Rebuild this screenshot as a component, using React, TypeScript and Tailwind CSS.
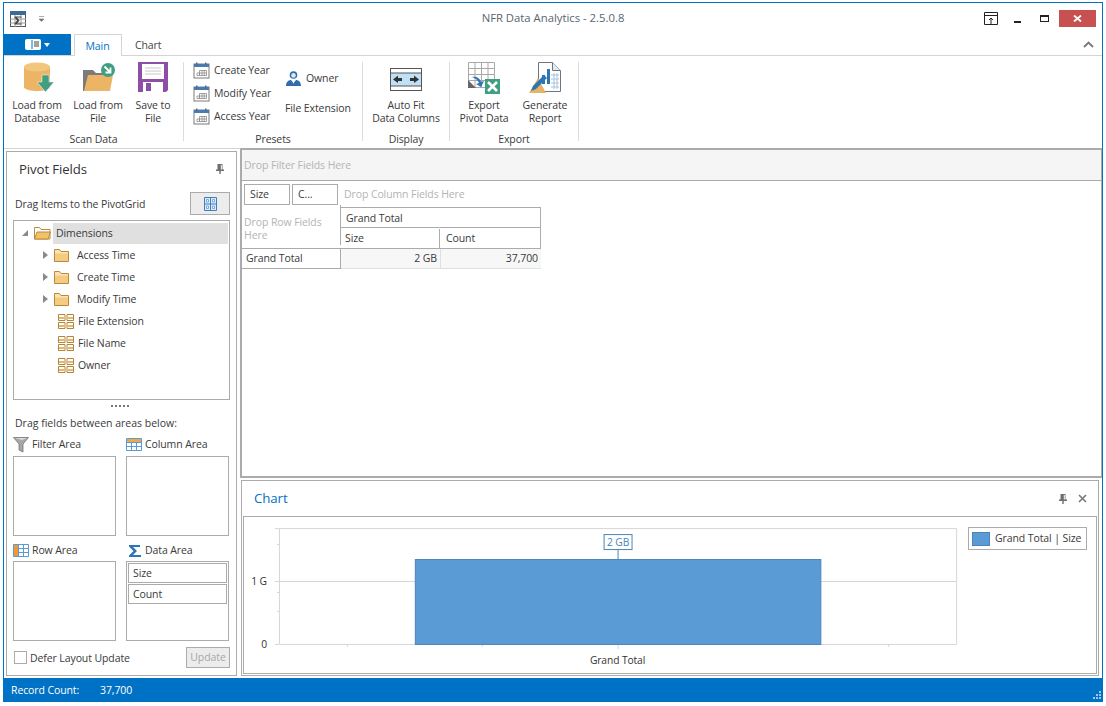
import React from 'react';

const CalendarIcon = () => (
  <svg width="17" height="17" viewBox="0 0 17 17" className="shrink-0">
    <rect x="1" y="2" width="15" height="14" fill="#fff" stroke="#7a7a7a" />
    <rect x="1" y="2" width="15" height="3" fill="#4a7bb0" />
    <rect x="3" y="0.5" width="1.5" height="3" fill="#4a6f98" />
    <rect x="12" y="0.5" width="1.5" height="3" fill="#4a6f98" />
    <path d="M6.5 8.500h7v5h-7zM4 11h9.500M9 8.500v5M11.200 8.500v5M6.500 11v2.500H4V11" fill="none" stroke="#8a8a8a" strokeWidth="0.800" />
  </svg>
);

const OwnerIcon = () => (
  <svg width="17" height="17" viewBox="0 0 17 17" className="shrink-0">
    <circle cx="8.500" cy="5" r="3.800" fill="#2f6cb0" />
    <circle cx="8.500" cy="5.400" r="2.300" fill="#dbe8f5" />
    <path d="M1 16c0-4 2.500-6 5-6l2.500 3 2.500-3c2.500 0 5 2 5 6z" fill="#2f6cb0" />
    <path d="M7.500 10.500h2L8.500 14z" fill="#fff" />
  </svg>
);

const DatabaseIcon = () => (
  <svg width="32" height="31" viewBox="0 0 32 31">
    <path d="M1 5v20c0 2.500 7 4 13 4s13-1.500 13-4V5z" fill="#ebb565" />
    <ellipse cx="14" cy="5" rx="13" ry="4.500" fill="#f1c77f" />
    <path d="M19 13h7v7h5l-8.500 10L14 20h5z" fill="#3f9f80" stroke="#fff" strokeWidth="0.500" />
  </svg>
);

const FolderLoadIcon = () => (
  <svg width="33" height="31" viewBox="0 0 33 31">
    <path d="M0 8h10l3 3h10v18H0z" fill="#7b7b7b" />
    <path d="M5 13h25l-3 16H1z" fill="#ecb566" />
    <circle cx="25" cy="8" r="7" fill="#3f9f80" />
    <path d="M21.500 4.500l5.500 5.500M27.500 5.500v5h-5" fill="none" stroke="#fff" strokeWidth="1.800" />
  </svg>
);

const SaveIcon = () => (
  <svg width="31" height="31" viewBox="0 0 31 31">
    <path d="M0 0h30v28l-2 2H0z" fill="#8e4ea6" />
    <rect x="4" y="2" width="22" height="15" fill="#fff" />
    <path d="M7 6h16M7 9h16M7 12h16" stroke="#c8c8c8" strokeWidth="1" />
    <rect x="5" y="20" width="20" height="10" fill="#fff" />
    <rect x="8" y="21" width="5" height="8" fill="#8e4ea6" />
  </svg>
);

const AutoFitIcon = () => (
  <svg width="33" height="23" viewBox="0 0 33 23">
    <rect x="0.500" y="0.500" width="31" height="22" fill="#fff" stroke="#555" />
    <rect x="1" y="5" width="30" height="13" fill="#bfe0f5" />
    <path d="M1 5h30M1 18h30" stroke="#555" />
    <path d="M3 11.500l5-4v2.500h4v3H8V15zM29 11.500l-5-4v2.500h-4v3h4V15z" fill="#333" />
  </svg>
);

const ExportIcon = () => (
  <svg width="33" height="32" viewBox="0 0 33 32">
    <path d="M0.500 0.500h26v25h-26zM0.500 6.500h26M0.500 12.500h26M0.500 18.500h26M7 0.500v25M13.500 0.500v25M20 0.500v25" fill="#fff" stroke="#a8a8a8" />
    <path d="M0 18v8h8z" fill="#666" />
    <path d="M4 15c4-1 8 1 9 5l3-1-3 6-5-3 3-1c-1-3-4-5-7-6z" fill="#2e75b6" />
    <rect x="17" y="17" width="15" height="15" fill="#3f9f80" />
    <path d="M20 20l9 9M29 20l-9 9" stroke="#fff" strokeWidth="2.600" />
  </svg>
);

const ReportIcon = () => (
  <svg width="33" height="33" viewBox="0 0 33 33">
    <path d="M9.500 0.500h14l8 8v21h-22z" fill="#fff" stroke="#6a7686" />
    <path d="M23.500 0.500v8h8" fill="#e8e8e8" stroke="#6a7686" />
    <rect x="13" y="13" width="3" height="9" fill="#2e75b6" />
    <rect x="18" y="7" width="3" height="15" fill="#2e75b6" />
    <path d="M22 13h8M22 17h8M22 21h8M22 25h8M25 11v16M28 11v16" stroke="#a8c4de" />
    <path d="M0 31L9 16l8 15z" fill="#e6b464" />
    <path d="M2 29l2-5L15 13l3 3L7 27z" fill="#2e75b6" />
  </svg>
);

const BigButton = ({ icon, lines, width }: { icon: React.ReactNode; lines: string[]; width: string }) => (
  <div className={`${width} flex flex-col items-center shrink-0 pt-[6px]`}>
    <div className="h-[36px] shrink-0 flex items-start justify-center">{icon}</div>
    <div className="mt-[1px] text-center leading-[13px] whitespace-nowrap">
      {lines.map((l) => (
        <div key={l}>{l}</div>
      ))}
    </div>
  </div>
);

const RibbonGroup = ({ label, width, children }: { label: string; width: string; children: React.ReactNode }) => (
  <div className={`${width} shrink-0 flex`}>
    <div className="flex-1 flex flex-col">
      <div className="h-[75px] shrink-0 flex">{children}</div>
      <div className="h-[16px] leading-[16px] text-center">{label}</div>
    </div>
    <div className="w-px h-[79px] mt-[6px] bg-[#dcdcdc]" />
  </div>
);

const OpenFolderIcon = () => (
  <svg width="17" height="14" viewBox="0 0 17 14" className="shrink-0">
    <path d="M0.500 1.500h5l1.500 2h9v9.500H0.500z" fill="#fff" stroke="#b88a3c" />
    <path d="M3 6h13.500l-2.500 7H0.500z" fill="#f3c267" stroke="#b88a3c" />
  </svg>
);

const FolderIcon = () => (
  <svg width="15" height="13" viewBox="0 0 15 13" className="shrink-0">
    <path d="M0.500 0.500h5l1.500 2h7.500v10H0.500z" fill="#fbe3b0" stroke="#b88a3c" />
    <path d="M1 4.500h13v7.500H1z" fill="#f4cb80" />
  </svg>
);

const FieldIcon = () => (
  <svg width="16" height="15" viewBox="0 0 16 15" className="shrink-0">
    <path d="M0.500 0.500h6.500v6H0.500zM9 0.500h6.500v6H9zM0.500 8.500h6.500v6H0.500zM9 8.500h6.500v6H9z" fill="#fff" stroke="#b5853c" />
    <path d="M1 4h5.500M9.500 4H15M1 12h5.500M9.500 12H15" stroke="#e8b86a" strokeWidth="2" />
  </svg>
);

const PinIcon = ({ color = '#6e6e6e' }: { color?: string }) => (
  <svg width="8" height="10" viewBox="0 0 8 10">
    <path d="M1.500 0h5v5.500H8V7H4.700v3h-1.400V7H0V5.500h1.500z" fill={color} />
    <path d="M4.800 1v4.500h1V1z" fill="#fff" />
  </svg>
);

const Arrow = () => (
  <svg width="5" height="8" viewBox="0 0 5 8" className="shrink-0">
    <path d="M0 0l5 4-5 4z" fill="#8a8a8a" />
  </svg>
);

const TreeChild = ({ label }: { label: string }) => (
  <div className="h-[22px] flex items-center pl-[29px]">
    <Arrow />
    <div className="ml-[6px]"><FolderIcon /></div>
    <span className="ml-[8px] pt-[1px]">{label}</span>
  </div>
);

const TreeLeaf = ({ label }: { label: string }) => (
  <div className="h-[22px] flex items-center pl-[44px]">
    <FieldIcon />
    <span className="ml-[4px] pt-[1px]">{label}</span>
  </div>
);

const AreaCell = ({ icon, label, labelClass, children }: { icon: React.ReactNode; label: string; labelClass: string; children?: React.ReactNode }) => (
  <div>
    <div className={`h-[20px] ${labelClass} flex items-center gap-[1px]`}>
      <div className="w-[18px] flex justify-start">{icon}</div>
      <span>{label}</span>
    </div>
    <div className="h-[80px] border border-[#ababab] p-[1px]">{children}</div>
  </div>
);

const Chart = () => (
  <svg width="853" height="157" viewBox="244 517 853 157" className="block">
    <path d="M279.500 528.500H957.500V644.500" fill="none" stroke="#d6d6d6" />
    <path d="M279.500 528V644.500H957.500M279.500 581.500H957.500" fill="none" stroke="#d6d6d6" />
    <path d="M275 528.500h4M277 544.500h2M275 581.500h4M277 592.500h2M277 611.500h2M275 644.500h4M347.500 645v2M482.500 645v2M618.500 645v4M889.500 645v2" stroke="#d6d6d6" />
    <rect x="415.500" y="559.500" width="406" height="85" fill="#5b9bd5" stroke="#4a84b8" />
    <path d="M618.500 550v9" stroke="#4a84b8" />
    <rect x="604.500" y="534.500" width="28" height="15" fill="#fff" stroke="#4a84b8" />
    <text x="618.500" y="546" textAnchor="middle" fontSize="10.300" fill="#4a84b8">2 GB</text>
    <text x="267" y="585" textAnchor="end" fontSize="10.300" fill="#333">1 G</text>
    <text x="267" y="648" textAnchor="end" fontSize="10.300" fill="#333">0</text>
    <text x="618" y="664" textAnchor="middle" fontSize="10.300" fill="#333">Grand Total</text>
  </svg>
);

export default function App() {
  return (
    <div className="w-[1106px] h-[706px] bg-white pt-[2px] pl-[3px] pr-[3px] pb-[4px] font-['Open_Sans',sans-serif] text-[10.500px] tracking-[-0.1px] text-[#3a3a3a] overflow-hidden">
      <div className="h-full flex flex-col border-x border-t border-[#0072c6]">
        {/* title bar */}
        <div className="h-[31px] shrink-0 grid grid-cols-[1fr_auto_1fr] items-center">
          <div className="flex items-center pl-[6px]">
            <svg width="16" height="16" viewBox="0 0 16 16">
              <rect x="0.500" y="0.500" width="15" height="15" fill="#fff" stroke="#555" />
              <rect x="0" y="0" width="16" height="4" fill="#3a6a98" />
              <path d="M0 8h16M0 12h16M5 4v12M11 4v12" stroke="#999" />
              <path d="M4.500 5.500h7v1H7l2.500 3L7 12.500h4.500v1h-7v-.8L7 9.500l-2.500-3.200z" fill="#444" />
            </svg>
            <svg width="7" height="6" viewBox="0 0 7 6" className="ml-[12px]">
              <path d="M1 0.500h5M1 3h5l-2.500 2.500z" fill="#777" stroke="#777" strokeWidth="0.600" />
            </svg>
          </div>
          <div className="text-[11.300px] tracking-normal text-[#5a6470] pb-[1px]">NFR Data Analytics - 2.5.0.8</div>
          <div className="flex items-center justify-end pr-[6px]">
            <svg width="14" height="13" viewBox="0 0 14 13">
              <path d="M0.500 0.500h13v12h-13zM0.500 3.500h13M7 12V6M5 8l2-2 2 2" fill="none" stroke="#222" />
            </svg>
            <div className="w-[7px] h-[2px] bg-[#222] ml-[16px] mt-[7px]" />
            <div className="w-[9px] h-[7px] border border-t-2 border-[#222] ml-[19px]" />
            <div className="w-[37px] h-[17px] ml-[10px] bg-[#c75050] flex items-center justify-center">
              <svg width="9" height="7" viewBox="0 0 9 7">
                <path d="M1 0.500l7 6M8 0.500l-7 6" stroke="#fff" strokeWidth="1.800" />
              </svg>
            </div>
          </div>
        </div>

        {/* tab row */}
        <div className="h-[22px] shrink-0 flex border-b border-[#d4d4d4]">
          <div className="w-[67px] h-[21px] bg-[#0072c6] flex items-center justify-center gap-[3px]">
            <svg width="16" height="11" viewBox="0 0 16 11">
              <rect x="0.500" y="0.500" width="15" height="10" rx="1" fill="#fff" stroke="#fff" />
              <path d="M7 1v9" stroke="#0072c6" />
              <path d="M9 3h5M9 5h5M9 7h5" stroke="#444" />
            </svg>
            <svg width="6" height="4" viewBox="0 0 6 4"><path d="M0 0h6L3 4z" fill="#fff" /></svg>
          </div>
          <div className="ml-[3px] w-[48px] h-[22px] pt-[2px] pr-[1px] border-x border-t border-[#d4d4d4] bg-white text-[#0072c6] flex items-center justify-center">Main</div>
          <div className="ml-[13px] h-[21px] pt-[3px] flex items-center text-[#444]">Chart</div>
          <div className="flex-1 flex justify-end items-center pr-[8px]">
            <svg width="11" height="7" viewBox="0 0 11 7"><path d="M1 6l4.500-4.500L10 6" fill="none" stroke="#777" strokeWidth="1.800" /></svg>
          </div>
        </div>

        {/* ribbon */}
        <div className="h-[92px] shrink-0 flex">
          <RibbonGroup label="Scan Data" width="w-[180px]">
            <BigButton width="w-[64px] ml-[1px]" lines={['Load from', 'Database']} icon={<div className="pl-[3px]"><DatabaseIcon /></div>} />
            <BigButton width="w-[58px]" lines={['Load from', 'File']} icon={<div className="pl-[2px]"><FolderLoadIcon /></div>} />
            <BigButton width="w-[52px]" lines={['Save to', 'File']} icon={<SaveIcon />} />
          </RibbonGroup>
          <RibbonGroup label="Presets" width="w-[179px]">
            <div className="pl-[9px] pt-[3px] w-[101px] flex flex-col">
              {['Create Year', 'Modify Year', 'Access Year'].map((t) => (
                <div key={t} className="h-[23px] shrink-0 flex items-center gap-[4px] whitespace-nowrap">
                  <CalendarIcon />
                  <span>{t}</span>
                </div>
              ))}
            </div>
            <div className="pt-[3px] flex flex-col whitespace-nowrap">
              <div className="h-[23px] shrink-0 mt-[8px] flex items-center gap-[4px]">
                <OwnerIcon />
                <span>Owner</span>
              </div>
              <div className="mt-[7px] h-[23px] shrink-0 flex items-center">File Extension</div>
            </div>
          </RibbonGroup>
          <RibbonGroup label="Display" width="w-[87px]">
            <BigButton width="w-[86px]" lines={['Auto Fit', 'Data Columns']} icon={<div className="pt-[6px]"><AutoFitIcon /></div>} />
          </RibbonGroup>
          <RibbonGroup label="Export" width="w-[129px]">
            <BigButton width="w-[68px]" lines={['Export', 'Pivot Data']} icon={<ExportIcon />} />
            <BigButton width="w-[54px]" lines={['Generate', 'Report']} icon={<ReportIcon />} />
          </RibbonGroup>
        </div>

        {/* body */}
        <div className="flex-1 min-h-0 flex">
          <div className="w-[236px] shrink-0 border-t border-[#d4d4d4] pt-[2px] pl-[2px]">
            <div className="w-[231px] h-[525px] border border-[#ababab]">
              <div className="h-[34px] flex items-center justify-between pl-[12px] pr-[12px]">
                <span className="text-[13.200px] text-[#333] pt-[1px]">Pivot Fields</span>
                <PinIcon />
              </div>
              <div className="mt-[6px] h-[23px] flex items-center justify-between pl-[8px] pr-[6px]">
                <span className="pt-[2px]">Drag Items to the PivotGrid</span>
                <div className="w-[40px] h-[23px] bg-[#ececec] border border-[#ababab] flex items-center justify-center">
                  <svg width="13" height="14" viewBox="0 0 13 14">
                    <path d="M0.500 0.500h12v13h-12z" fill="#dcebf8" stroke="#3f7fbf" />
                    <path d="M6.500 0.500v13M0.500 7h12" stroke="#3f7fbf" />
                    <path d="M2.500 2.500h2v2.500h-2zM8.500 2.500h2v2.500h-2zM2.500 9h2v2.500h-2zM8.500 9h2v2.500h-2z" fill="#fff" stroke="#7faadb" />
                  </svg>
                </div>
              </div>
              <div className="mt-[5px] ml-[6px] w-[217px] h-[180px] border border-[#ababab] pt-[1px] pr-[1px]">
                <div className="h-[22px] flex items-center">
                  <svg width="6" height="6" viewBox="0 0 6 6" className="ml-[8px]"><path d="M6 0v6H0z" fill="#8a8a8a" /></svg>
                  <div className="ml-[6px] w-[18px]"><OpenFolderIcon /></div>
                  <div className="ml-[1px] flex-1 h-[21px] bg-[#e0e0e0] flex items-center pl-[3px] pt-[1px]">Dimensions</div>
                </div>
                <TreeChild label="Access Time" />
                <TreeChild label="Create Time" />
                <TreeChild label="Modify Time" />
                <TreeLeaf label="File Extension" />
                <TreeLeaf label="File Name" />
                <TreeLeaf label="Owner" />
              </div>
              <div className="h-[12px] flex items-center justify-center gap-[2px] pr-[3px]">
                {[0, 1, 2, 3, 4].map((i) => (
                  <div key={i} className="w-[2px] h-[2px] bg-[#777]" />
                ))}
              </div>
              <div className="h-[24px] flex items-center pl-[8px] tracking-normal">Drag fields between areas below:</div>
              <div className="ml-[6px] grid grid-cols-[103px_103px] gap-x-[10px] gap-y-[5px]">
                <AreaCell
                  label="Filter Area"
                  labelClass="pb-[3px]"
                  icon={
                    <svg width="16" height="17" viewBox="0 0 16 17">
                      <path d="M0.500 1.500h15L10 8v8l-4-2V8z" fill="#a8a8a8" stroke="#666" strokeWidth="0.700" />
                      <path d="M2 2h12L9 4z" fill="#dcdcdc" />
                    </svg>
                  }
                />
                <AreaCell
                  label="Column Area"
                  labelClass="pb-[3px]"
                  icon={
                    <svg width="16" height="13" viewBox="0 0 16 13">
                      <path d="M0.500 0.500h15v12h-15zM0.500 4.500h15M0.500 8.500h15M5.500 0.500v12M10.500 0.500v12" fill="#fff" stroke="#5b9bd5" />
                      <rect x="1" y="1" width="14" height="3" fill="#f0a94a" />
                    </svg>
                  }
                />
                <AreaCell
                  label="Row Area"
                  labelClass="pb-[1px]"
                  icon={
                    <svg width="16" height="13" viewBox="0 0 16 13">
                      <path d="M0.500 0.500h15v12h-15zM0.500 4.500h15M0.500 8.500h15M5.500 0.500v12M10.500 0.500v12" fill="#fff" stroke="#5b9bd5" />
                      <rect x="1" y="1" width="4" height="11" fill="#ee9a3a" />
                    </svg>
                  }
                />
                <AreaCell
                  label="Data Area"
                  labelClass="pb-[1px]"
                  icon={
                    <svg width="16" height="14" viewBox="0 0 16 14" className="ml-[2px]">
                      <path d="M1 1h11v2H5l4 4-4 4h8v2H1v-1.500L5.500 7 1 2.500z" fill="#2b75b8" />
                    </svg>
                  }
                >
                  <div className="h-[20px] pt-[1px] border border-[#ababab] flex items-center pl-[4px]">Size</div>
                  <div className="mt-[1px] h-[20px] pt-[1px] border border-[#ababab] flex items-center pl-[4px]">Count</div>
                </AreaCell>
              </div>
              <div className="mt-[6px] h-[21px] flex items-center pl-[7px] pr-[6px]">
                <div className="w-[13px] h-[13px] border border-[#ababab] bg-white" />
                <span className="ml-[3px] pt-[2px]">Defer Layout Update</span>
                <div className="ml-auto w-[44px] h-[21px] bg-[#ececec] border border-[#ababab] text-[#a8a8a8] flex items-center justify-center">Update</div>
              </div>
            </div>
          </div>

          <div className="w-[862px] flex flex-col">
            <div className="h-[330px] shrink-0 border-2 border-r border-[#ababab]">
              <div className="h-[31px] pt-[2px] bg-[#f5f5f5] border-b border-[#ababab] flex items-center pl-[2px] text-[#b4b4b4]">Drop Filter Fields Here</div>
              <div className="pt-[3px] pl-[2px] flex gap-[2px]">
                <div className="w-[46px] h-[21px] border border-[#ababab] flex items-center pl-[5px]">Size</div>
                <div className="w-[46px] h-[21px] border border-[#ababab] flex items-center pl-[5px]">C...</div>
                <div className="ml-[4px] h-[21px] flex items-center text-[#b4b4b4]">Drop Column Fields Here</div>
              </div>
              <div className="flex">
                <div className="w-[99px] shrink-0 h-[40px] pt-[11px] pl-[2px] leading-[13px] text-[#b4b4b4] border-r border-[#ababab]">Drop Row Fields<br />Here</div>
                <div className="w-[200px] mt-[2px] border-t border-r border-[#ababab]">
                  <div className="h-[20px] pt-[2px] flex items-center pl-[5px] border-b border-[#ababab]">Grand Total</div>
                  <div className="h-[20px] pt-[1px] flex">
                    <div className="w-[99px] flex items-center pl-[4px] border-r border-[#ababab]">Size</div>
                    <div className="flex-1 flex items-center pl-[6px]">Count</div>
                  </div>
                </div>
              </div>
              <div className="flex h-[21px] border-t border-[#ababab] w-[299px]">
                <div className="w-[99px] border-r border-b border-[#ababab] flex items-center pl-[4px]">Grand Total</div>
                <div className="w-[100px] bg-[#f7f7f7] border-r border-b border-[#e0e0e0] flex items-center justify-end pr-[3px]">2 GB</div>
                <div className="w-[100px] bg-[#f7f7f7] border-b border-[#e0e0e0] flex items-center justify-end pr-[3px]">37,700</div>
              </div>
            </div>
            <div className="mt-[2px] ml-[1px] w-[858px] h-[196px] border border-[#ababab] flex flex-col">
              <div className="h-[35px] shrink-0 flex items-center justify-between pl-[12px] pr-[11px]">
                <span className="text-[13.300px] text-[#0072c6]">Chart</span>
                <div className="flex items-center gap-[11px]">
                  <PinIcon />
                  <svg width="9" height="9" viewBox="0 0 9 9"><path d="M1 1l7 7M8 1l-7 7" stroke="#777" strokeWidth="1.600" /></svg>
                </div>
              </div>
              <div className="ml-[1px] mr-[1px] h-[158px] border border-[#ababab] flex relative">
                <Chart />
                <div className="absolute left-[724px] top-[10px] w-[119px] h-[23px] border border-[#ababab] bg-white flex items-center pl-[3px] gap-[5px] whitespace-nowrap">
                  <div className="w-[18px] h-[14px] bg-[#5b9bd5] border border-[#4a84b8]" />
                  <span>Grand Total | Size</span>
                </div>
              </div>
            </div>
          </div>
        </div>

        {/* status bar */}
        <div className="h-[24px] shrink-0 bg-[#0072c6] text-white flex items-center pl-[7px] relative">
          <span className="w-[89px] pt-[1px]">Record Count:</span>
          <span className="pt-[1px]">37,700</span>
          <svg width="9" height="9" viewBox="0 0 9 9" className="absolute right-[1px] bottom-[2px]">
            <path d="M7 0h2v2H7zM4 3h2v2H4zM7 3h2v2H7zM1 6h2v2H1zM4 6h2v2H4zM7 6h2v2H7z" fill="#9cc6e6" />
          </svg>
        </div>
      </div>
    </div>
  );
}
